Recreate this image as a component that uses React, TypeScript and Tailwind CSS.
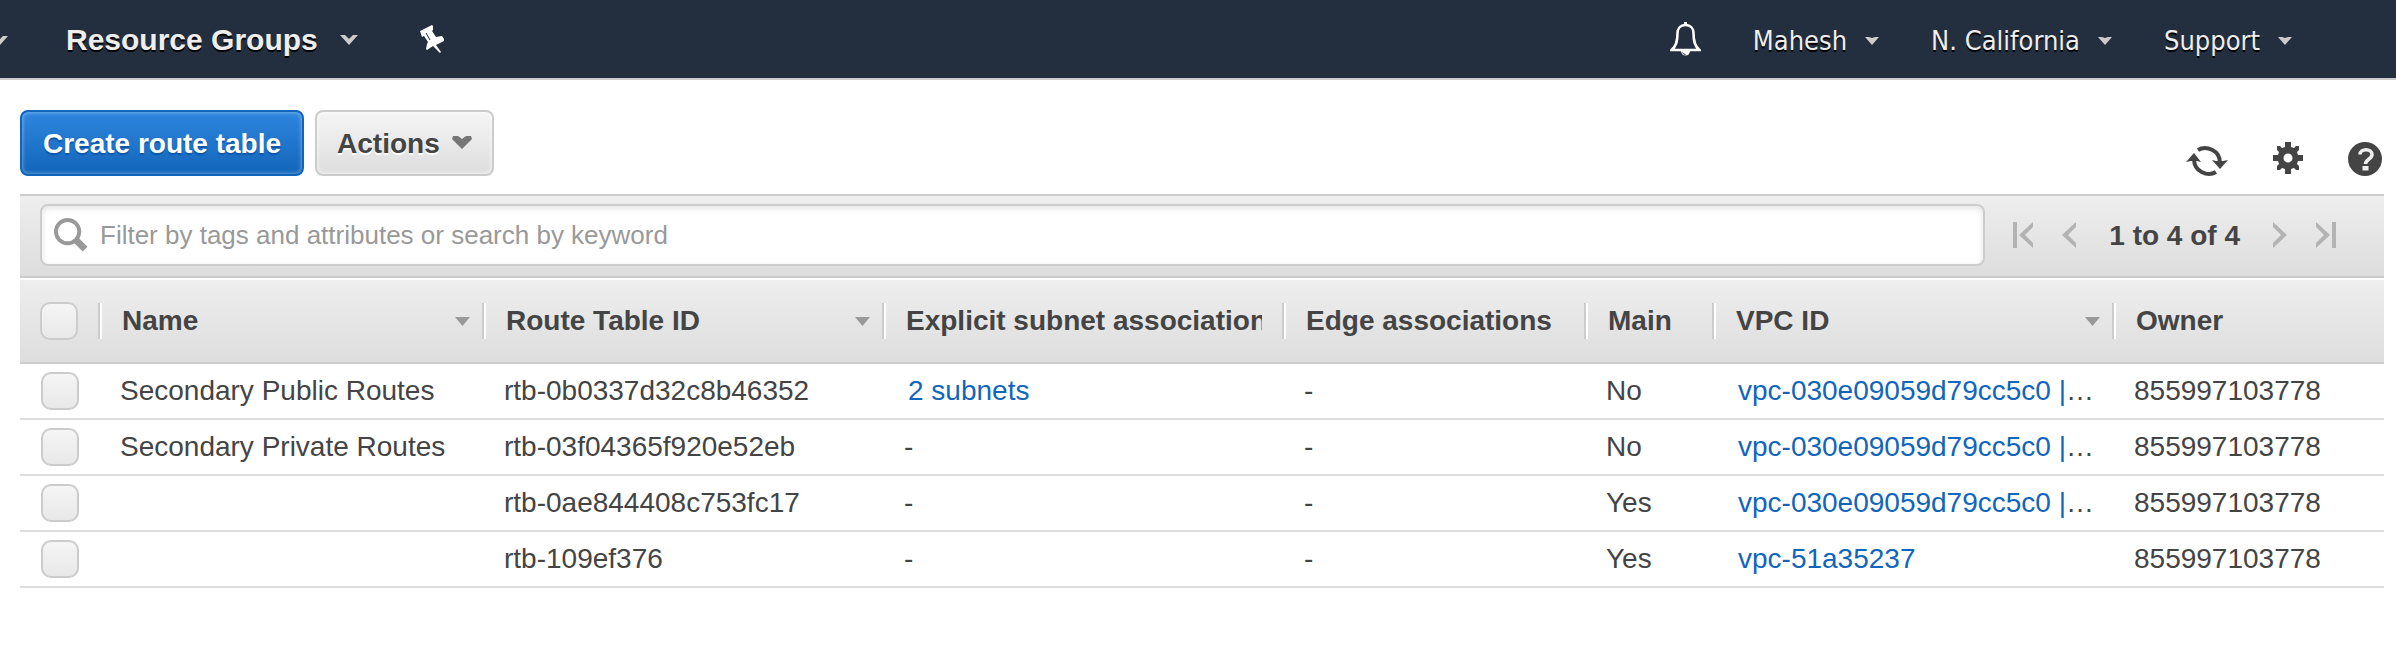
import type { ReactNode } from "react";

function NavCaret({ className }: { className: string }) {
  return (
    <svg className={className} viewBox="0 0 18 10" aria-hidden="true">
      <path d="M0 0h5l4 4 4-4h5L9 10z" fill="currentColor" />
    </svg>
  );
}

function NavMenu({ label }: { label: string }) {
  return (
    <button type="button" className="flex items-center gap-[18px] pt-[3px]">
      <span className="text-[27px] leading-8 [text-shadow:0_2px_0_#000]">{label}</span>
      <svg className="h-2 w-[14px] text-[#ccc]" viewBox="0 0 14 8" aria-hidden="true">
        <path d="M0 0h4l3 1 3-1h4L7 8z" fill="currentColor" />
      </svg>
    </button>
  );
}

function TopNav() {
  return (
    <header className="flex h-20 items-center justify-between overflow-hidden border-b-2 border-[#ccc] bg-[#232f3e] text-[#eee]">
      <div className="flex items-center">
        <button type="button" aria-label="Services" className="-ml-[10px] pt-1">
          <NavCaret className="h-[10px] w-[18px] text-[#ccc]" />
        </button>
        <button type="button" className="ml-[58px] flex items-center gap-[22px] pt-[2px]">
          <span className="text-[30px] leading-9 font-bold [text-shadow:0_2px_0_#000]">Resource Groups</span>
          <NavCaret className="h-[10px] w-[18px] text-[#ccc]" />
        </button>
        <button type="button" aria-label="Pin shortcuts" className="ml-[62px]">
          <svg className="h-7 w-6" viewBox="0 0 24 28" aria-hidden="true">
            <path
              d="M0 6 12 0l1 1v4l-1 1 4 6 6-1 2 3v2l-8 4 5 7-1 1-7-7-6 4-1-1 1-5 1-2-4-6-2 1z"
              fill="#fff"
            />
            <path d="m6 8 4 7" stroke="#232f3e" strokeWidth="1" />
          </svg>
        </button>
      </div>
      <div className="mr-[104px] flex items-center gap-[52px] font-['DejaVu_Sans_Condensed','Noto_Sans',sans-serif]">
        <button type="button" aria-label="Notifications">
          <svg className="h-[34px] w-[31px]" viewBox="0 0 31 34" fill="none" stroke="#fff" strokeWidth="2.500" aria-hidden="true">
            <path d="M15.500 3C10 3 7.500 7 7.500 11c0 8-1 13-6 17h28c-5-4-6-9-6-17 0-4-2.500-8-8-8z" />
            <path d="M15.500 0v4" strokeWidth="3" />
            <path d="M11 29a4.500 4.500 0 0 0 9 0z" fill="#fff" stroke="none" />
            <path d="M12.500 30.500a3 3 0 0 0 3 2" stroke="#232f3e" strokeWidth="1" />
          </svg>
        </button>
        <NavMenu label="Mahesh" />
        <NavMenu label="N. California" />
        <NavMenu label="Support" />
      </div>
    </header>
  );
}

function IconButton({ label, children }: { label: string; children: ReactNode }) {
  return (
    <button type="button" aria-label={label} className="text-[#444]">
      {children}
    </button>
  );
}

function ActionBar() {
  return (
    <div className="flex items-start justify-between pt-[30px] pr-[14px] pb-4 pl-5">
      <div className="flex gap-[11px] pb-[2px]">
        <button
          type="button"
          className="h-[66px] rounded-lg border-2 border-[#1166bb] bg-linear-to-b from-[#2e86de] to-[#1166bb] px-[21px] pt-[2px] text-[28px] font-bold text-white shadow-[inset_0_0_4px_rgba(255,255,255,0.5)] [text-shadow:0_2px_1px_#0f55a5]"
        >
          Create route table
        </button>
        <button
          type="button"
          className="flex h-[66px] items-center gap-3 rounded-lg border-2 border-[#ccc] bg-linear-to-b from-[#f5f5f5] to-[#ddd] px-5 pt-[2px] text-[28px] font-bold text-[#444] shadow-[inset_0_0_4px_#fff] [text-shadow:0_2px_0_#fff]"
        >
          Actions
          <svg className="mb-1 h-[13px] w-5" viewBox="0 0 20 13" aria-hidden="true">
            <path d="M1 0h5l4 3 4-3h5l1 3-10 10L0 3z" fill="#777" />
          </svg>
        </button>
      </div>
      <div className="flex items-start gap-[45px] pt-8">
        <IconButton label="Refresh">
          <svg className="h-[35px] w-[42px]" viewBox="0 -3 42 35" fill="none" stroke="currentColor" strokeWidth="4" aria-hidden="true">
            <path d="M12 5c8-5 22 0 22 13" />
            <path d="M30 27C22 32 8 27 8 14" />
            <path d="M26 15l4 1h7l5-1-8 9zM0 17l5-1h6l4 1L8 8z" fill="currentColor" stroke="none" />
          </svg>
        </IconButton>
        <IconButton label="Settings">
          <svg className="h-8 w-[30px]" viewBox="0 0 30 32" aria-hidden="true">
            <path
              fillRule="evenodd"
              fill="currentColor"
              d="M12 0h6v5l3 1 2-2h3v4l-2 2 1 3h5v6h-5l-1 3 2 2v4h-3l-2-2-3 1v5h-6v-5l-3-1-2 2H4v-4l2-2-1-3H0v-6h5l1-3-2-2V4h3l2 2 3-1zM15 11.500a4.500 4.500 0 1 0 0 9 4.500 4.500 0 0 0 0-9z"
            />
          </svg>
        </IconButton>
        <IconButton label="Help">
          <svg className="h-[34px] w-[34px]" viewBox="0 0 34 34" aria-hidden="true">
            <circle cx="17" cy="17" r="17" fill="currentColor" />
            <path d="M12 12.500c0-6.500 12-6.500 12 0 0 5-6.500 4.500-6.500 9.500" fill="none" stroke="#eee" strokeWidth="3.500" />
            <path d="M14.500 24h6v4.500h-6z" fill="#eee" />
          </svg>
        </IconButton>
      </div>
    </div>
  );
}

function PageArrow({ label, d, wide }: { label: string; d: string; wide?: boolean }) {
  return (
    <button type="button" aria-label={label} className="text-[#b3b3b3]">
      <svg
        className={wide ? "h-[26px] w-5" : "h-[26px] w-[14px]"}
        viewBox={wide ? "0 0 20 26" : "0 0 14 26"}
        fill="currentColor"
        aria-hidden="true"
      >
        <path d={d} />
      </svg>
    </button>
  );
}

function FilterBar() {
  return (
    <div className="flex h-[84px] items-center border-y-2 border-[#ccc] bg-linear-to-b from-[#eee] to-[#ddd] pr-12 pb-[2px] pl-5">
      <label className="flex h-[62px] flex-1 items-center rounded-lg border-2 border-[#ccc] bg-white pl-3 shadow-[inset_0_2px_6px_rgba(0,0,0,0.12)]">
        <svg className="h-[34px] w-[34px]" viewBox="0 0 35 35" fill="none" stroke="#999" aria-hidden="true">
          <circle cx="14" cy="14" r="12" strokeWidth="4" />
          <path d="m23 23 9 9" strokeWidth="7" />
        </svg>
        <input
          type="text"
          aria-label="Filter route tables"
          placeholder="Filter by tags and attributes or search by keyword"
          className="ml-3 flex-1 bg-transparent text-[26px] text-[#444] outline-none placeholder:text-[#999]"
        />
      </label>
      <nav aria-label="Pagination" className="ml-7 flex items-center gap-[29px]">
        <PageArrow wide label="First page" d="M0 0h4v26H0zM20 0v5l-8 8 8 8v5L6 13z" />
        <PageArrow label="Previous page" d="M14 0v5l-8 8 8 8v5L0 13z" />
        <span className="mx-1 pt-[2px] text-[28px] font-bold text-[#444]">1 to 4 of 4</span>
        <PageArrow label="Next page" d="M0 0v5l8 8-8 8v5l14-13z" />
        <PageArrow wide label="Last page" d="M16 0h4v26h-4zM0 0v5l8 8-8 8v5l14-13z" />
      </nav>
    </div>
  );
}

const COLUMNS = [
  { label: "Name", width: "w-[384px]", sortable: true },
  { label: "Route Table ID", width: "w-[400px]", sortable: true },
  { label: "Explicit subnet associations", width: "w-[400px]", sortable: false },
  { label: "Edge associations", width: "w-[302px]", sortable: false },
  { label: "Main", width: "w-[128px]", sortable: false },
  { label: "VPC ID", width: "w-[400px]", sortable: true },
  { label: "Owner", width: "", sortable: false },
];

const ROWS = [
  { name: "Secondary Public Routes", id: "rtb-0b0337d32c8b46352", subnets: "2 subnets", main: "No", vpc: "vpc-030e09059d79cc5c0 |", more: true },
  { name: "Secondary Private Routes", id: "rtb-03f04365f920e52eb", subnets: "", main: "No", vpc: "vpc-030e09059d79cc5c0 |", more: true },
  { name: "", id: "rtb-0ae844408c753fc17", subnets: "", main: "Yes", vpc: "vpc-030e09059d79cc5c0 |", more: true },
  { name: "", id: "rtb-109ef376", subnets: "", main: "Yes", vpc: "vpc-51a35237", more: false },
];

function Checkbox({ label }: { label: string }) {
  return (
    <input
      type="checkbox"
      aria-label={label}
      className="block h-[38px] w-[38px] appearance-none rounded-[10px] border-2 border-[#ccc] bg-linear-to-b from-[#f5f5f5] to-[#e8e8e8]"
    />
  );
}

function Cell({ children }: { children?: ReactNode }) {
  return <td className="border-b-2 border-[#ddd] pr-2 pl-[22px] whitespace-nowrap">{children}</td>;
}

function RouteTable() {
  return (
    <table className="mt-[2px] w-full table-fixed border-separate border-spacing-0 text-left text-[28px] leading-8 text-[#444]">
      <thead>
        <tr className="h-[84px] bg-linear-to-b from-[#eee] to-[#ddd]">
          <th className="w-[78px] border-b-2 border-[#ccc] pl-5">
            <Checkbox label="Select all route tables" />
          </th>
          {COLUMNS.map((column) => (
            <th key={column.label} className={`border-b-2 border-[#ccc] ${column.width}`}>
              <div className="flex h-9 items-center border-l-2 border-[#ccc] shadow-[inset_2px_0_0_#fff]">
                <span className="mr-5 ml-[22px] flex-1 overflow-hidden whitespace-nowrap">{column.label}</span>
                {column.sortable ? (
                  <svg className="mr-3 h-[9px] w-[15px]" viewBox="0 0 15 9" aria-hidden="true">
                    <path d="M0 0h15L7.500 9z" fill="#999" />
                  </svg>
                ) : null}
              </div>
            </th>
          ))}
        </tr>
      </thead>
      <tbody>
        {ROWS.map((row) => (
          <tr key={row.id} className="h-14">
            <td className="border-b-2 border-[#ddd] pl-[21px]">
              <Checkbox label={`Select ${row.id}`} />
            </td>
            <Cell>{row.name}</Cell>
            <Cell>{row.id}</Cell>
            <Cell>
              {row.subnets ? (
                <a href="#subnets" className="ml-1 text-[#1166bb]">
                  {row.subnets}
                </a>
              ) : (
                "-"
              )}
            </Cell>
            <Cell>-</Cell>
            <Cell>{row.main}</Cell>
            <Cell>
              <a href="#vpc" className="ml-1 text-[#1166bb]">
                {row.vpc}
              </a>
              {row.more ? "…" : null}
            </Cell>
            <Cell>855997103778</Cell>
          </tr>
        ))}
      </tbody>
    </table>
  );
}

export default function App() {
  return (
    <div className="min-h-screen bg-white font-['Liberation_Sans',Arial,sans-serif]">
      <TopNav />
      <main>
        <ActionBar />
        <section className="mr-3 ml-5">
          <FilterBar />
          <RouteTable />
        </section>
      </main>
    </div>
  );
}
